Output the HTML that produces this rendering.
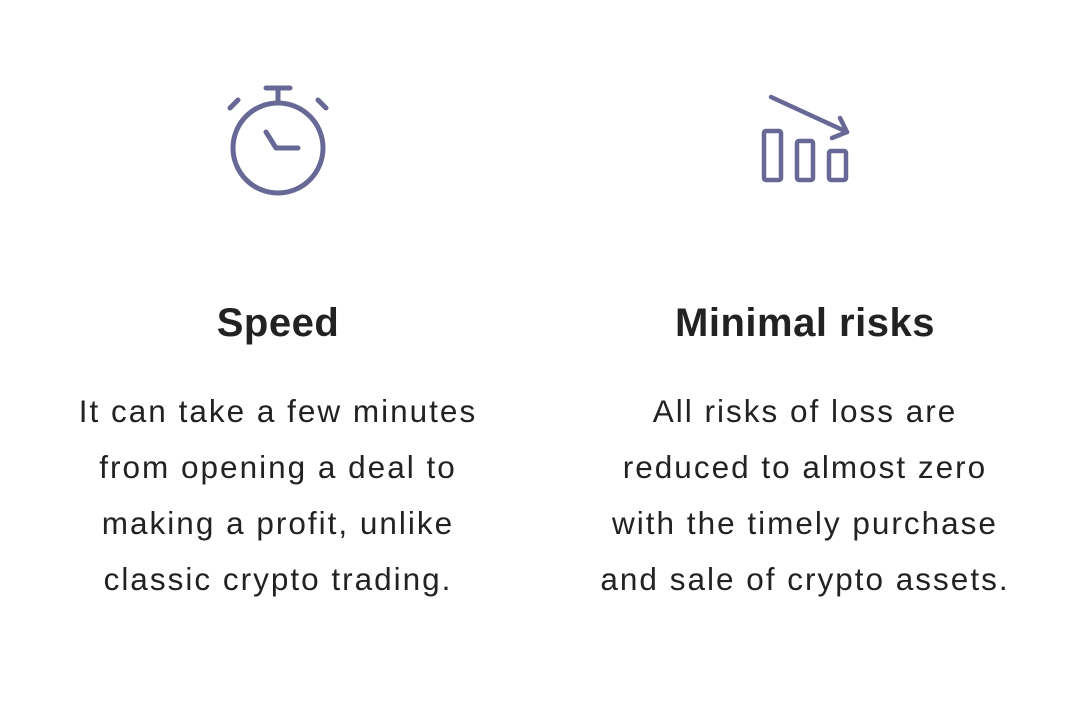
<!DOCTYPE html>
<html><head><style>
html,body{margin:0;padding:0;background:#fff;width:1080px;height:720px;overflow:hidden}
body{font-family:"Liberation Sans",sans-serif;color:#222;position:relative}
.col{position:absolute;top:0;width:500px;text-align:center}
h2{position:absolute;left:0;width:100%;top:299px;margin:0;font-size:40px;font-weight:bold;line-height:48px;letter-spacing:0.5px}
p{position:absolute;left:0;width:100%;top:383px;margin:0;font-size:31.5px;line-height:56px;letter-spacing:2px}
svg{position:absolute;left:0;top:0}
</style></head><body>
<svg width="1080" height="720" fill="none" stroke="#676896" stroke-width="5" stroke-linecap="round" stroke-linejoin="round">
<circle cx="278" cy="148" r="45"/>
<line x1="266" y1="88" x2="290" y2="88"/>
<line x1="278" y1="88" x2="278" y2="103"/>
<line x1="230" y1="108" x2="238" y2="100"/>
<line x1="318" y1="100" x2="326" y2="108"/>
<polyline points="266,132 276,148 298,148"/>
<g stroke-width="4.5">
<line x1="771" y1="97" x2="847" y2="132"/>
<polyline points="840,118 847,132 832,138"/>
<rect x="764" y="131" width="17" height="49" rx="2"/>
<rect x="797" y="141" width="16" height="39" rx="2"/>
<rect x="829" y="151" width="17" height="29" rx="2"/>
</g>
</svg>
<div class="col" style="left:28px"><h2>Speed</h2><p>It can take a few minutes<br>from opening a deal to<br>making a profit, unlike<br>classic crypto trading.</p></div>
<div class="col" style="left:555px"><h2>Minimal risks</h2><p>All risks of loss are<br>reduced to almost zero<br>with the timely purchase<br>and sale of crypto assets.</p></div>
</body></html>
